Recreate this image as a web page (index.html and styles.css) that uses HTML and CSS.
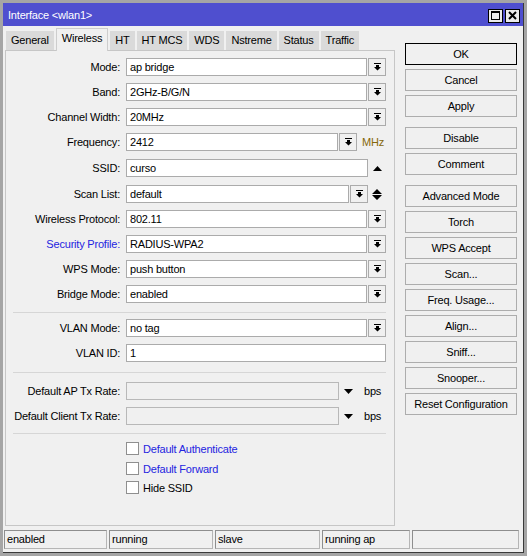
FILE: index.html
```html
<!DOCTYPE html>
<html lang="en">

<head>
  <meta charset="UTF-8">
  <title>Interface &lt;wlan1&gt;</title>
  <link rel="stylesheet" href="styles.css">
</head>

<body>
  <div class="window">
    <div class="titlebar">
      <span class="title">Interface &lt;wlan1&gt;</span>
      <span class="tb-buttons">
        <span class="tb-btn">
          <svg width="9" height="9" viewBox="0 0 9 9"><path d="M0 0h9v9H0z M1 2v6h7V2z" fill="#000" fill-rule="evenodd"/></svg>
        </span>
        <span class="tb-btn">
          <svg width="9" height="9" viewBox="0 0 9 9"><path d="M1 1l7 7M8 1L1 8" stroke="#000" stroke-width="2"/></svg>
        </span>
      </span>
    </div>

    <div class="client">
      <div class="main">
        <div class="left">
          <div class="tabs">
            <span class="tab">General</span>
            <span class="tab active">Wireless</span>
            <span class="tab">HT</span>
            <span class="tab">HT MCS</span>
            <span class="tab">WDS</span>
            <span class="tab">Nstreme</span>
            <span class="tab">Status</span>
            <span class="tab">Traffic</span>
          </div>

          <div class="panel">
            <div class="row">
              <span class="lbl">Mode:</span>
              <span class="field">ap bridge</span>
              <span class="dd"><svg class="dd-icon" width="7" height="8" viewBox="0 0 7 8"><path d="M0 0h7v1H0z M2 2h3v2h2L3.5 7.5 0 4h2z"/></svg></span>
            </div>
            <div class="row">
              <span class="lbl">Band:</span>
              <span class="field">2GHz-B/G/N</span>
              <span class="dd"><svg class="dd-icon" width="7" height="8" viewBox="0 0 7 8"><path d="M0 0h7v1H0z M2 2h3v2h2L3.5 7.5 0 4h2z"/></svg></span>
            </div>
            <div class="row">
              <span class="lbl">Channel Width:</span>
              <span class="field">20MHz</span>
              <span class="dd"><svg class="dd-icon" width="7" height="8" viewBox="0 0 7 8"><path d="M0 0h7v1H0z M2 2h3v2h2L3.5 7.5 0 4h2z"/></svg></span>
            </div>
            <div class="row">
              <span class="lbl">Frequency:</span>
              <span class="field short">2412</span>
              <span class="dd"><svg class="dd-icon" width="7" height="8" viewBox="0 0 7 8"><path d="M0 0h7v1H0z M2 2h3v2h2L3.5 7.5 0 4h2z"/></svg></span>
              <span class="unit mhz">MHz</span>
            </div>
            <div class="row loose">
              <span class="lbl">SSID:</span>
              <span class="field wide">curso</span>
              <svg class="arrow up" width="9" height="5" viewBox="0 0 9 5"><path d="M4.5 0L9 5H0z"/></svg>
            </div>
            <div class="row loose">
              <span class="lbl">Scan List:</span>
              <span class="field mid">default</span>
              <span class="dd"><svg class="dd-icon" width="7" height="8" viewBox="0 0 7 8"><path d="M0 0h7v1H0z M2 2h3v2h2L3.5 7.5 0 4h2z"/></svg></span>
              <svg class="arrow updown" width="10" height="11" viewBox="0 0 10 11"><path d="M5 0L10 5H0z M0 6h10L5 11z"/></svg>
            </div>
            <div class="row">
              <span class="lbl">Wireless Protocol:</span>
              <span class="field">802.11</span>
              <span class="dd"><svg class="dd-icon" width="7" height="8" viewBox="0 0 7 8"><path d="M0 0h7v1H0z M2 2h3v2h2L3.5 7.5 0 4h2z"/></svg></span>
            </div>
            <div class="row">
              <span class="lbl link">Security Profile:</span>
              <span class="field">RADIUS-WPA2</span>
              <span class="dd"><svg class="dd-icon" width="7" height="8" viewBox="0 0 7 8"><path d="M0 0h7v1H0z M2 2h3v2h2L3.5 7.5 0 4h2z"/></svg></span>
            </div>
            <div class="row">
              <span class="lbl">WPS Mode:</span>
              <span class="field">push button</span>
              <span class="dd"><svg class="dd-icon" width="7" height="8" viewBox="0 0 7 8"><path d="M0 0h7v1H0z M2 2h3v2h2L3.5 7.5 0 4h2z"/></svg></span>
            </div>
            <div class="row">
              <span class="lbl">Bridge Mode:</span>
              <span class="field">enabled</span>
              <span class="dd"><svg class="dd-icon" width="7" height="8" viewBox="0 0 7 8"><path d="M0 0h7v1H0z M2 2h3v2h2L3.5 7.5 0 4h2z"/></svg></span>
            </div>

            <div class="sep sep-vlan"></div>

            <div class="row first">
              <span class="lbl">VLAN Mode:</span>
              <span class="field">no tag</span>
              <span class="dd"><svg class="dd-icon" width="7" height="8" viewBox="0 0 7 8"><path d="M0 0h7v1H0z M2 2h3v2h2L3.5 7.5 0 4h2z"/></svg></span>
            </div>
            <div class="row">
              <span class="lbl">VLAN ID:</span>
              <span class="field full">1</span>
            </div>

            <div class="sep sep-rate"></div>

            <div class="row rate-first">
              <span class="lbl">Default AP Tx Rate:</span>
              <span class="field rate"></span>
              <svg class="arrow down" width="9" height="5" viewBox="0 0 9 5"><path d="M0 0h9L4.5 5z"/></svg>
              <span class="unit bps">bps</span>
            </div>
            <div class="row">
              <span class="lbl">Default Client Tx Rate:</span>
              <span class="field rate"></span>
              <svg class="arrow down" width="9" height="5" viewBox="0 0 9 5"><path d="M0 0h9L4.5 5z"/></svg>
              <span class="unit bps">bps</span>
            </div>

            <div class="sep sep-check"></div>

            <div class="check c1"><span class="box"></span><span class="link">Default Authenticate</span></div>
            <div class="check c2"><span class="box"></span><span class="link">Default Forward</span></div>
            <div class="check c3"><span class="box"></span><span>Hide SSID</span></div>
          </div>
        </div>

        <div class="actions">
          <span class="btn default">OK</span>
          <span class="btn">Cancel</span>
          <span class="btn">Apply</span>
          <span class="btn group">Disable</span>
          <span class="btn">Comment</span>
          <span class="btn group">Advanced Mode</span>
          <span class="btn">Torch</span>
          <span class="btn">WPS Accept</span>
          <span class="btn">Scan...</span>
          <span class="btn">Freq. Usage...</span>
          <span class="btn">Align...</span>
          <span class="btn">Sniff...</span>
          <span class="btn">Snooper...</span>
          <span class="btn">Reset Configuration</span>
        </div>
      </div>

      <div class="statusbar">
        <span class="cell s1">enabled</span>
        <span class="cell s2">running</span>
        <span class="cell s3">slave</span>
        <span class="cell s4">running ap</span>
        <span class="cell s5"></span>
      </div>
    </div>
  </div>
</body>

</html>
```

FILE: styles.css
```css
* {
  box-sizing: border-box;
}

body {
  margin: 0;
  background-color: #a5a5a5;
  font-family: "Liberation Sans", Arial, sans-serif;
  font-size: 11px;
  letter-spacing: -0.2px;
  color: #000;
}

.window {
  width: 521px;
  height: 550px;
  margin: 3px 0 0 3px;
  border-right: 1px solid #3a3a3a;
  border-bottom: 1px solid #3a3a3a;
  background-color: #f0f0f0;
  display: flex;
  flex-direction: column;
}

/* 標題列 */
.titlebar {
  height: 23px;
  flex-shrink: 0;
  background-color: #4f4fcf;
  color: #fff;
  display: flex;
  align-items: center;
  padding: 0 3px 0 5px;
}

.tb-buttons {
  margin-left: auto;
  display: flex;
  gap: 2px;
  padding-top: 2px;
}

.tb-btn {
  width: 15px;
  height: 14px;
  border: 1px solid #000;
  background-color: #ececec;
  display: flex;
  align-items: center;
  justify-content: center;
}

.client {
  flex: 1;
  display: flex;
  flex-direction: column;
}

.main {
  display: flex;
  padding: 2px 0 0 2px;
}

.left {
  width: 390px;
}

/* 分頁 */
.tabs {
  height: 22px;
  display: flex;
  align-items: flex-end;
  gap: 2px;
  padding-left: 1px;
}

.tab {
  height: 19px;
  line-height: 19px;
  padding: 0 5px;
  background-color: #dadada;
  white-space: nowrap;
}

.tab.active {
  height: 23px;
  line-height: 18px;
  margin-bottom: -1px;
  background-color: #f0f0f0;
  border: 1px solid #cdcdcd;
  border-bottom: none;
  position: relative;
  z-index: 1;
}

.panel {
  height: 476px;
  border: 1px solid #c6c6c6;
}

.row {
  display: flex;
  align-items: center;
  height: 18px;
  margin-top: 7px;
}

.row.loose {
  margin-top: 8px;
}

.row.first {
  margin-top: 6px;
}

.row.rate-first {
  margin-top: 9px;
}

.lbl {
  width: 114px;
  margin-right: 6px;
  text-align: right;
  white-space: nowrap;
}

.link {
  color: #2424e0;
}

.field {
  width: 241px;
  height: 18px;
  line-height: 16px;
  padding-left: 3px;
  border: 1px solid #ababab;
  background-color: #fff;
  white-space: nowrap;
}

.field.short {
  width: 212px;
}

.field.mid {
  width: 223px;
}

.field.wide {
  width: 242px;
}

.field.full {
  width: 260px;
}

.field.rate {
  width: 213px;
  background-color: #f0f0f0;
  border-color: #b8b8b8;
}

.dd {
  width: 18px;
  height: 18px;
  margin-left: 1px;
  border: 1px solid #ababab;
  background-color: #f0f0f0;
  display: flex;
  align-items: center;
  justify-content: center;
}

.unit.mhz {
  margin-left: 5px;
  color: #86680a;
}

.unit.bps {
  margin-left: 11px;
}

.arrow.up {
  margin-left: 5px;
}

.arrow.updown {
  margin-left: 4px;
}

.arrow.down {
  margin-left: 5px;
}

.sep {
  width: 373px;
  height: 1px;
  margin-left: 7px;
  background-color: #d6d6d6;
}

.sep-vlan {
  margin-top: 9px;
}

.sep-rate {
  margin-top: 10px;
}

.sep-check {
  margin-top: 8px;
}

.check {
  display: flex;
  align-items: center;
  height: 13px;
  padding-left: 120px;
}

.check.c1 {
  margin-top: 8px;
}

.check.c2 {
  margin-top: 7px;
}

.check.c3 {
  margin-top: 6px;
}

.box {
  width: 13px;
  height: 13px;
  margin-right: 4px;
  border: 1px solid #8f8f8f;
  background-color: #fff;
}

/* 右側按鈕 */
.actions {
  width: 112px;
  margin-left: 10px;
  padding-top: 15px;
  display: flex;
  flex-direction: column;
  gap: 4px;
}

.btn {
  height: 22px;
  line-height: 20px;
  text-align: center;
  border: 1px solid #adadad;
  background-color: #f0f0f0;
  white-space: nowrap;
}

.btn.default {
  border-color: #000;
}

.btn.group {
  margin-top: 6px;
}

/* 狀態列 */
.statusbar {
  display: flex;
  gap: 2px;
  margin-top: 4px;
  padding-left: 1px;
}

.cell {
  height: 19px;
  line-height: 17px;
  padding-left: 2px;
  border: 1px solid #b5b5b5;
  border-top-color: #8e8e8e;
  border-left-color: #8e8e8e;
  white-space: nowrap;
}

.s1 { width: 103px; }
.s2 { width: 104px; }
.s3 { width: 105px; }
.s4 { width: 88px; }
.s5 { width: 107px; }
```
